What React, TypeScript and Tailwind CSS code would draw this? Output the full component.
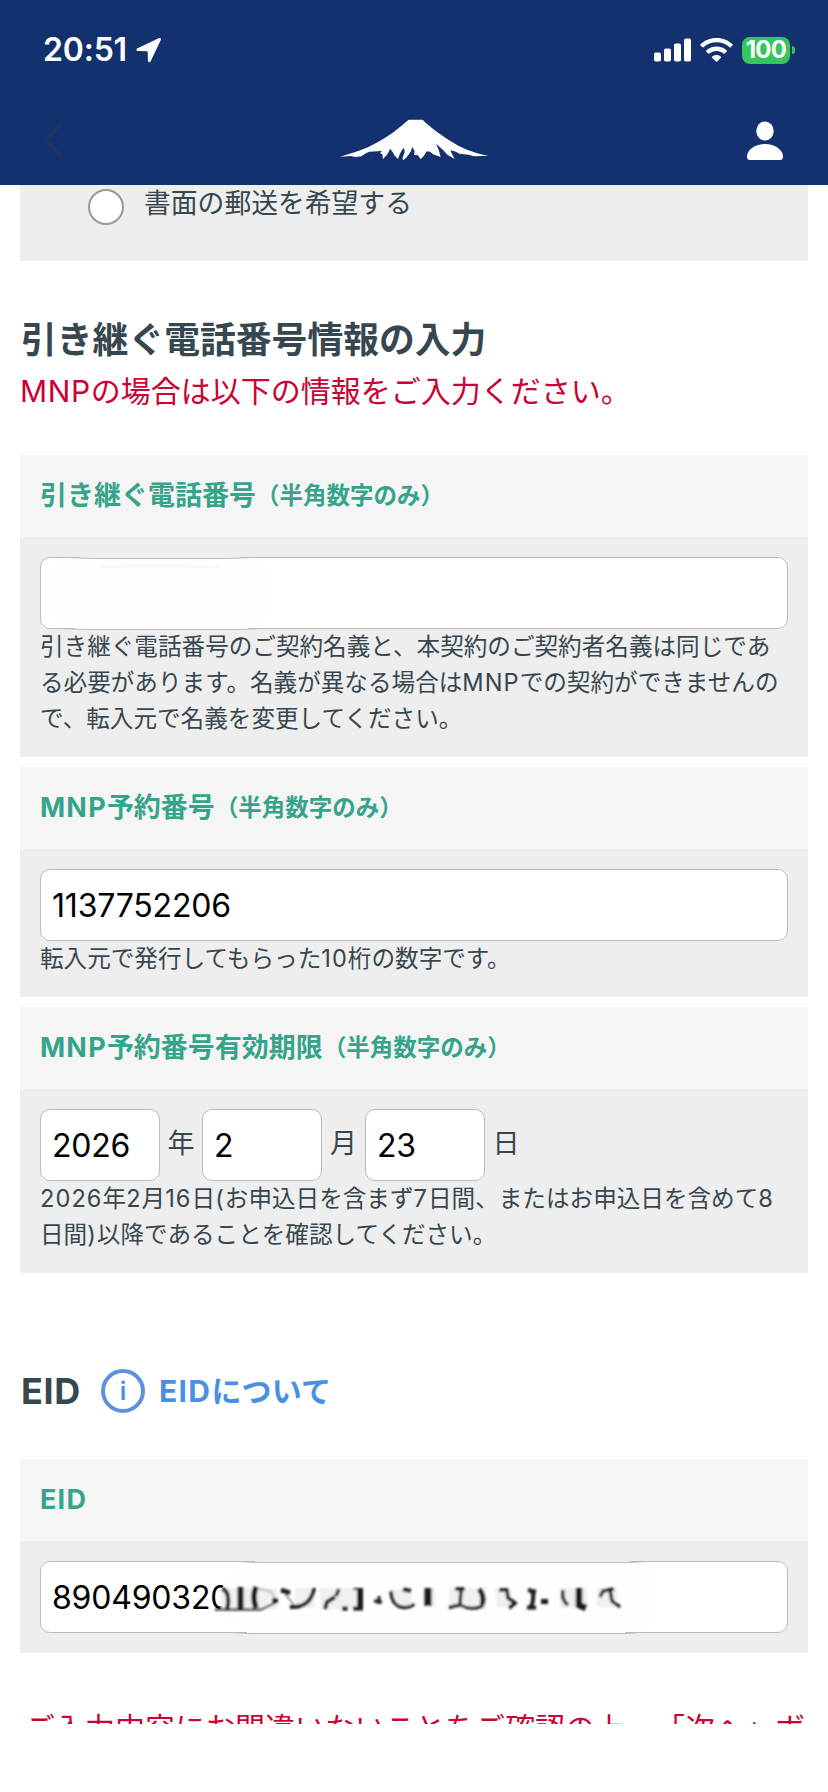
import React from 'react';

interface CardProps {
  title: React.ReactNode;
  note?: string;
  children: React.ReactNode;
}

interface FieldProps {
  value: string;
  className?: string;
}

const StatusBar: React.FC = () => (
  <div className="flex h-[100px] items-center justify-between pl-[43px] pr-[33px]">
    <div className="flex items-center gap-[9px]">
      <span className="w-[84px] text-[32px] leading-none font-semibold tracking-[-0.2px] text-white">20:51</span>
      <svg className="h-[26px] w-[26px]" viewBox="0 0 26 26" fill="#fff">
        <path d="M22.6 1.2 1.6 11.2C-.2 12.2 0 14 2 14.1L11.2 14.3Q11.7 14.3 11.7 15L11.9 23.6C12 25.6 14 25.8 14.8 24L24.8 3C25.4 1.5 24.3.4 22.6 1.2Z" />
      </svg>
    </div>
    <div className="flex items-center">
      <svg className="h-[24px] w-[38px]" viewBox="0 0 38 24" fill="#fff">
        <rect x="0" y="14.5" width="7" height="9" rx="1.8" />
        <rect x="10" y="10.5" width="7" height="13" rx="1.8" />
        <rect x="20" y="5.5" width="7" height="18" rx="1.8" />
        <rect x="30" y="0.5" width="7" height="23" rx="1.8" />
      </svg>
      <svg className="ml-[8px] h-[24px] w-[33px]" viewBox="0 0 33 24" fill="#fff">
        <path d="M16.5 0C23 0 28.5 2.4 32.5 6.3Q33 6.9 32.5 7.4L30.6 9.3Q30 9.7 29.5 9.2C26 6 21.5 4.2 16.5 4.2S7 6 3.5 9.2Q3 9.7 2.4 9.3L.5 7.4Q0 6.9.5 6.3C4.5 2.4 10 0 16.5 0Z" />
        <path d="M16.5 8.6C20.5 8.6 24.1 10 26.8 12.5Q27.3 13 26.8 13.5L24.7 15.5Q24.2 15.9 23.6 15.5C21.7 13.8 19.2 12.9 16.5 12.9S11.3 13.8 9.4 15.5Q8.8 15.9 8.3 15.5L6.2 13.5Q5.7 13 6.2 12.5C8.9 10 12.5 8.6 16.5 8.6Z" />
        <path d="M16.5 17.1C18.2 17.1 19.8 17.7 21 18.7Q21.4 19.2 21 19.7L17 23.6Q16.5 24 16 23.6L12 19.7Q11.6 19.2 12 18.7C13.2 17.7 14.8 17.1 16.5 17.1Z" />
      </svg>
      <span className="ml-[9px] flex h-[27px] w-[48px] items-center justify-center rounded-[8px] bg-[#34c759] text-[24px] leading-none font-bold tracking-[-0.7px] text-white">
        100
      </span>
      <span className="ml-[2px] h-[8px] w-[3px] rounded-r-full bg-[#34c759]" />
    </div>
  </div>
);

const NavBar: React.FC = () => (
  <div className="flex h-[85px] items-center justify-between pb-[6px] pl-[43px] pr-[44px]">
    <svg className="h-[36px] w-[21px]" viewBox="0 0 21 36" fill="none" stroke="#23355f" strokeWidth="2.6" strokeLinecap="round" strokeLinejoin="round">
      <path d="M19 1.5 2 18 19 34.5" />
    </svg>
    <svg className="mb-[3px] ml-[18px] h-[56px] w-[168px]" viewBox="0 0 504 168" fill="#fff">
      <path d="M236 29H278C305 56 345 84 385 107C415 122 445 132 475 137L432 139L416 134L388 131L378 125L362 121L364 128L374 147L352 134L340 121L318 101L326 119L332 141L309 133L300 125L290 124L282 137L272 148L264 136L252 134L254 124L247 111L242 125L230 142L220 151L217 146L224 126L222 113L216 120L209 133L204 147L193 136L188 126L180 116L176 126L171 134L159 147L157 133L150 130L156 122L142 124L118 125L108 130L94 139L76 141L62 138L30 140C70 128 105 118 140 98C175 79 207 55 236 29Z" />
    </svg>
    <svg className="h-[40px] w-[38px]" viewBox="0 0 38 40" fill="#fff">
      <ellipse cx="19" cy="11" rx="8.7" ry="9.5" />
      <path d="M19 24C29 24 37 30 37 36.5Q37 40 34 40H4Q1 40 1 36.5C1 30 9 24 19 24Z" />
    </svg>
  </div>
);

// Latin letters and digits are set slightly wider than the kana around them
const Latin: React.FC<{ children: React.ReactNode }> = ({ children }) => (
  <span className="tracking-[0.045em]">{children}</span>
);

const Card: React.FC<CardProps> = ({ title, note, children }) => (
  <section>
    <h3 className="flex h-[82px] items-center bg-[#f5f5f5] px-[20px] text-[27px] font-bold text-[#35a48a]">
      <span>{title}</span>
      {note && <span className="text-[23.5px]">{note}</span>}
    </h3>
    <div className="bg-[#eeeeee] p-[20px]">{children}</div>
  </section>
);

const Field: React.FC<FieldProps> = ({ value, className = 'w-full' }) => (
  <input
    type="text"
    defaultValue={value}
    className={`block h-[72px] rounded-[10px] border border-[#bbbbbb] bg-white px-[11px] text-[32px] tracking-[-0.2px] text-black outline-none ${className}`}
  />
);

const PhoneSmudge: React.FC = () => (
  <svg className="absolute top-0 left-0 h-[74px] w-[250px]" viewBox="0 0 250 74" fill="none">
    <rect x="5" y="2" width="228" height="69" rx="32" fill="#fefefe" />
    <path d="M40 .5H200" stroke="#eeeeee" />
    <path d="M35 71.5H208" stroke="#fefefe" />
    <path d="M28 .5Q45 1.5 60 1.5H180Q195 1.5 212 .5M20 71.5Q40 72.5 60 72.5H190Q205 72.5 222 71.5" stroke="#bcbcbc" />
    <path d="M60 10Q110 8 180 10" stroke="#f9f9f9" strokeWidth="3" />
  </svg>
);

const EidSmudge: React.FC = () => (
  <svg className="absolute top-0 left-[165px] h-[74px] w-[450px]" viewBox="0 0 450 74" fill="none">
    <defs>
      <filter id="soft" x="-5%" y="-20%" width="110%" height="140%">
        <feGaussianBlur stdDeviation="0.8" />
      </filter>
    </defs>
    <rect x="17" y="3" width="438" height="66" rx="30" fill="#fdfefd" />
    <path d="M50 .5H425" stroke="#eeeeee" />
    <path d="M42 71.5H420" stroke="#fdfefd" />
    <path d="M35 .5Q45 1.5 55 1.5H420Q430 1.5 440 .5M27 71.5Q40 72.5 50 72.5H415Q425 72.5 435 71.5" stroke="#bcbcbc" />
    <g filter="url(#soft)">
      <path d="M16 27H72V48H16ZM90 27H110V47H90ZM115 27H158V48H115ZM184 28H206V46H190ZM222 27H230V46H222ZM244 27H281V48H244ZM290 28H306V46H292ZM355 27H382V47H355ZM392 27H412V46H392Z" fill="#eef1ef" />
      <g stroke="#141c18">
        <path d="M17 28Q22 29 23 36Q24 43 22 48" strokeWidth="4" />
        <path d="M10 48.500H56L72 41" strokeWidth="1.8" />
        <path d="M35.5 26V48" strokeWidth="6" />
        <path d="M51 26Q47 36 51 47" strokeWidth="5.5" />
        <path d="M53 27L66 31L71 38" stroke="#8a938f" strokeWidth="1.2" />
        <path d="M67 39.5H73M76 29L85 32" strokeWidth="4.5" />
        <path d="M80 33L89 44" stroke="#7b8480" strokeWidth="1.5" />
        <path d="M85 46Q106 47 109 27" strokeWidth="4" />
        <path d="M120 48L122 41L130 36M137 47.5H143M148 47.5H158" strokeWidth="4" />
        <path d="M134 28L131 35" strokeWidth="3.5" />
        <path d="M155 27V47" strokeWidth="6" />
        <path d="M148 28H156" strokeWidth="2" />
        <path d="M169 40L177 41M174 35V43" strokeWidth="3" />
        <path d="M186 30Q187 46 199 46.5Q206 46.5 209 43" strokeWidth="3.4" />
        <path d="M198 28.5L206 30" strokeWidth="4" />
        <path d="M223 27V45" strokeWidth="7" />
        <path d="M244 46.5L255 44L256 28M250 28H260" strokeWidth="3.4" />
        <path d="M255 44Q266 50 278 45" strokeWidth="3" />
        <path d="M274 28Q280 35 277 44" strokeWidth="5" />
        <path d="M294 29H302L303 37L310 42L304 47" strokeWidth="3.6" />
        <path d="M323 29L331 31M327 29Q330 37 326 46M322 46.5H331" strokeWidth="4" />
        <path d="M336 40.5H343" strokeWidth="5" />
        <path d="M358 29Q356 39 363 44" strokeWidth="3.4" />
        <path d="M374 27V44L381 47" strokeWidth="6.5" />
        <path d="M395 36L398 30L409 28M405 29L407 40L415 46" strokeWidth="3.4" />
      </g>
    </g>
  </svg>
);

export default function App() {
  return (
    <div className="h-[1792px] w-[828px] overflow-hidden bg-white font-['Inter','Noto_Sans_CJK_JP',sans-serif] text-[#37474f] [text-spacing-trim:space-all]">
      <header className="h-[185px] bg-[#12316e]">
        <StatusBar />
        <NavBar />
      </header>

      <main className="h-[1539px] overflow-hidden px-[20px]">
        <div className="flex h-[76px] items-start bg-[#eeeeee] pl-[68px]">
          <span className="mt-[4px] h-[36px] w-[36px] rounded-full border-2 border-[#999999] bg-white" />
          <span className="ml-[20px] text-[26.8px] leading-[36px]">書面の郵送を希望する</span>
        </div>

        <h2 className="mt-[53px] pl-px text-[35.8px] leading-[52px] font-bold">引き継ぐ電話番号情報の入力</h2>
        <p className="-mt-px text-[30px] leading-[52px] text-[#cc0033]">
          <span className="tracking-[0.02em]">MNP</span>の場合は以下の情報をご入力ください。
        </p>

        <div className="mt-[38px] flex flex-col gap-[10px]">
          <Card title="引き継ぐ電話番号" note="（半角数字のみ）">
            <div className="relative">
              <Field value="" />
              <PhoneSmudge />
            </div>
            <p className="text-[23.6px] leading-[36px] whitespace-nowrap">
              引き継ぐ電話番号のご契約名義と、本契約のご契約者名義は同じであ
              <br />
              る必要があります。名義が異なる場合は<Latin>MNP</Latin>での契約ができませんの
              <br />
              で、転入元で名義を変更してください。
            </p>
          </Card>

          <Card title={<><Latin>MNP</Latin>予約番号</>} note="（半角数字のみ）">
            <Field value="1137752206" />
            <p className="text-[23.6px] leading-[36px]">
              転入元で発行してもらった<Latin>10</Latin>桁の数字です。
            </p>
          </Card>

          <Card title={<><Latin>MNP</Latin>予約番号有効期限</>} note="（半角数字のみ）">
            <div className="flex items-center text-[27px] leading-[36px]">
              <Field value="2026" className="w-[120px]" />
              <span className="w-[42px] pb-[2px] text-center">年</span>
              <Field value="2" className="w-[120px]" />
              <span className="w-[43px] pb-[2px] text-center">月</span>
              <Field value="23" className="w-[120px]" />
              <span className="w-[42px] pb-[2px] text-center">日</span>
            </div>
            <p className="text-[23.6px] leading-[36px] whitespace-nowrap">
              <Latin>2026</Latin>年<Latin>2</Latin>月<Latin>16</Latin>日<Latin>(</Latin>お申込日を含まず<Latin>7</Latin>日間、またはお申込日を含めて<Latin>8</Latin>
              <br />
              日間<Latin>)</Latin>以降であることを確認してください。
            </p>
          </Card>
        </div>

        <div className="mt-[92px] flex h-[52px] items-center pl-px">
          <h2 className="w-[60px] text-[36px] font-bold tracking-[0.6px]">EID</h2>
          <a className="ml-[20px] flex items-center text-[30px] font-bold text-[#4a90e2]">
            <span className="flex h-[44px] w-[44px] items-center justify-center rounded-full border-4 border-[#5b92dd] text-[25px] leading-none font-semibold">
              i
            </span>
            <span className="ml-[14px] tracking-[0.2px]">
              <Latin>EID</Latin>について
            </span>
          </a>
        </div>

        <div className="mt-[42px]">
          <Card title={<Latin>EID</Latin>}>
            <div className="relative">
              <Field value="890490320" />
              <EidSmudge />
            </div>
          </Card>
        </div>

        <p className="mt-[49px] pl-[5px] text-[30px] leading-[52px] whitespace-nowrap text-[#cc0033]">
          ご入力内容にお間違いないことをご確認の上、「次へ」ボ
        </p>
      </main>
    </div>
  );
}
